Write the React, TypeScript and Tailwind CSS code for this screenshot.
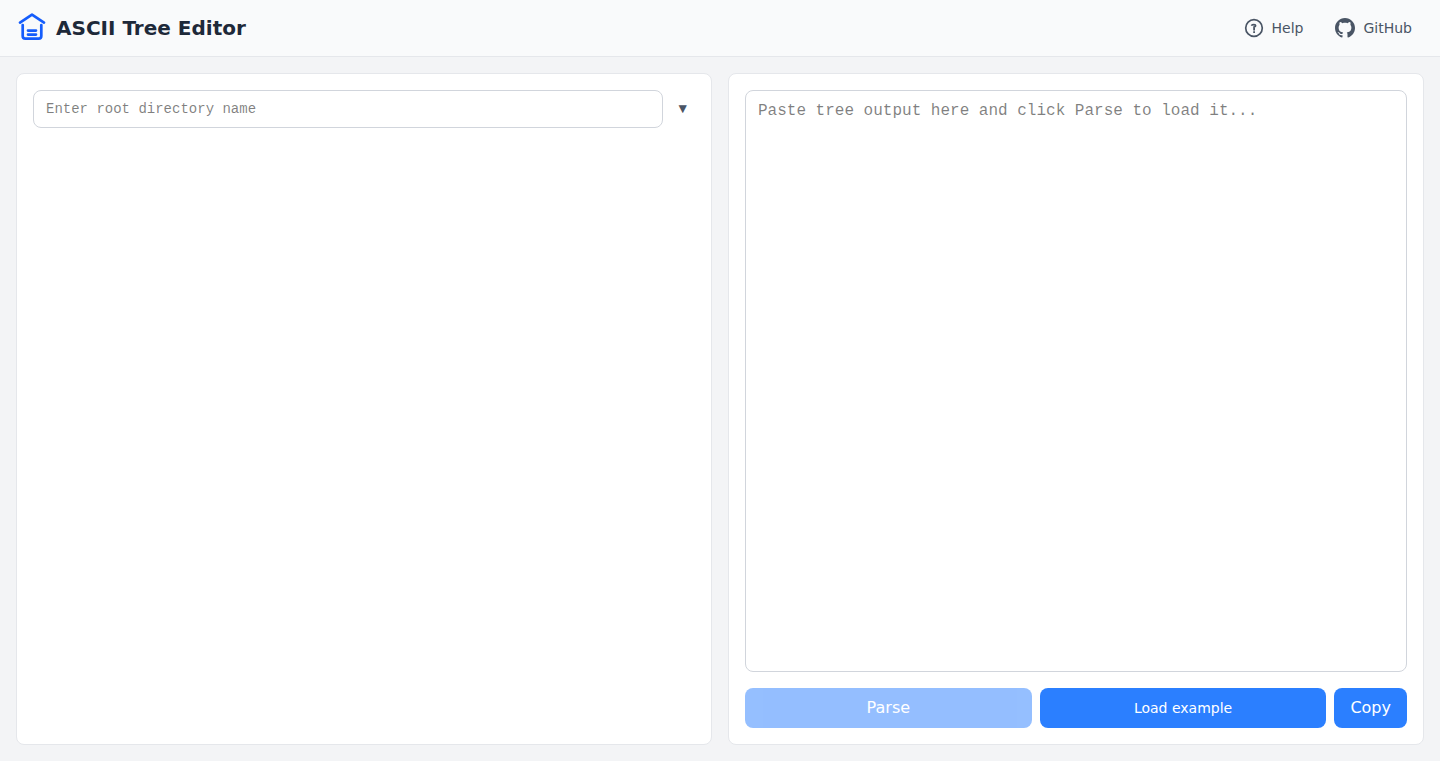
import React, { useState } from 'react';

const EXAMPLE_TREE = `my-app
├── src
│   ├── components
│   │   └── Button.tsx
│   └── index.ts
├── package.json
└── README.md`;

function LogoIcon() {
  return (
    <svg
      className="w-8 h-8 text-blue-600"
      viewBox="0 0 32 32"
      fill="none"
      stroke="currentColor"
      strokeWidth="2.7"
      strokeLinecap="round"
      strokeLinejoin="round"
      aria-hidden="true"
    >
      <path d="M4 10.6L16 2.7L28 10.6" />
      <path d="M6.7 13V24Q6.7 26.6 9.3 26.6H22.7Q25.3 26.6 25.3 24V13" />
      <path d="M12 18.6H20M12 22.6H20" />
    </svg>
  );
}

function HelpIcon() {
  return (
    <svg className="w-5 h-5" viewBox="0 0 20 20" fill="none" stroke="currentColor" aria-hidden="true">
      <circle cx="10" cy="10" r="8.3" strokeWidth="1.7" />
      <path d="M7.8 7.8V7.2Q8.2 6.7 10 6.7Q11.6 6.7 11.6 7.8Q11.6 8.6 10.1 9V12.4" strokeWidth="1.8" />
      <path d="M10.1 13.3V14.9" strokeWidth="1.8" />
    </svg>
  );
}

function GitHubIcon() {
  return (
    <svg className="w-5 h-5" viewBox="0 0 24 24" fill="currentColor" aria-hidden="true">
      <path d="M12 0c-6.626 0-12 5.373-12 12 0 5.302 3.438 9.8 8.207 11.387.599.111.793-.261.793-.577v-2.234c-3.338.726-4.033-1.416-4.033-1.416-.546-1.387-1.333-1.756-1.333-1.756-1.089-.745.083-.729.083-.729 1.205.084 1.839 1.237 1.839 1.237 1.07 1.834 2.807 1.304 3.492.997.107-.775.418-1.305.762-1.604-2.665-.305-5.467-1.334-5.467-5.931 0-1.311.469-2.381 1.236-3.221-.124-.303-.535-1.524.117-3.176 0 0 1.008-.322 3.301 1.23.957-.266 1.983-.399 3.003-.404 1.02.005 2.047.138 3.006.404 2.291-1.552 3.297-1.23 3.297-1.23.653 1.653.242 2.874.118 3.176.77.84 1.235 1.911 1.235 3.221 0 4.609-2.807 5.624-5.479 5.921.43.372.823 1.102.823 2.222v3.293c0 .319.192.694.801.576 4.765-1.589 8.199-6.086 8.199-11.386 0-6.627-5.373-12-12-12z" />
    </svg>
  );
}

export default function App() {
  const [root, setRoot] = useState('');
  const [output, setOutput] = useState('');

  const parse = () => setRoot(output.trim().split('\n')[0]);

  return (
    <div className="h-screen flex flex-col bg-gray-100 font-['DejaVu_Sans',sans-serif]">
      <header className="h-14 box-content flex items-center justify-between px-4 bg-gray-50 border-b border-gray-200">
        <div className="flex items-center gap-2">
          <LogoIcon />
          <h1 className="text-xl font-bold text-gray-800">ASCII Tree Editor</h1>
        </div>
        <nav className="flex items-center gap-2 text-sm text-gray-600">
          <button type="button" className="flex items-center gap-2 px-3 py-2 rounded-lg hover:bg-gray-100">
            <HelpIcon />
            Help
          </button>
          <a href="https://github.com" className="flex items-center gap-2 px-3 py-2 rounded-lg hover:bg-gray-100">
            <GitHubIcon />
            GitHub
          </a>
        </nav>
      </header>

      <main className="flex-1 min-h-0 grid grid-cols-2 gap-4 p-4">
        <section className="bg-white border border-gray-200 rounded-lg p-4">
          <div className="flex items-center gap-2 font-['Liberation_Mono',monospace] text-sm">
            <input
              type="text"
              aria-label="Root directory name"
              placeholder="Enter root directory name"
              value={root}
              onChange={(e) => setRoot(e.target.value)}
              className="flex-1 min-w-0 px-3 py-2 border border-gray-300 rounded-lg"
            />
            <button type="button" aria-label="Expand" className="px-2 py-1 text-gray-600">
              ▼
            </button>
          </div>
        </section>

        <section className="flex flex-col gap-4 min-h-0 bg-white border border-gray-200 rounded-lg p-4">
          <textarea
            aria-label="Tree output"
            placeholder="Paste tree output here and click Parse to load it..."
            value={output}
            onChange={(e) => setOutput(e.target.value)}
            className="flex-1 min-h-0 w-full resize-none px-3 py-2 border border-gray-300 rounded-lg font-['Liberation_Mono',monospace]"
          />
          <div className="flex gap-2 text-white">
            <button
              type="button"
              onClick={parse}
              disabled={!output}
              className="flex-1 px-4 py-2 bg-blue-500 rounded-lg disabled:opacity-50"
            >
              Parse
            </button>
            <button
              type="button"
              onClick={() => setOutput(EXAMPLE_TREE)}
              className="flex-1 px-4 py-2 bg-blue-500 rounded-lg text-sm"
            >
              Load example
            </button>
            <button
              type="button"
              onClick={() => navigator.clipboard.writeText(output)}
              className="px-4 py-2 bg-blue-500 rounded-lg"
            >
              Copy
            </button>
          </div>
        </section>
      </main>
    </div>
  );
}
